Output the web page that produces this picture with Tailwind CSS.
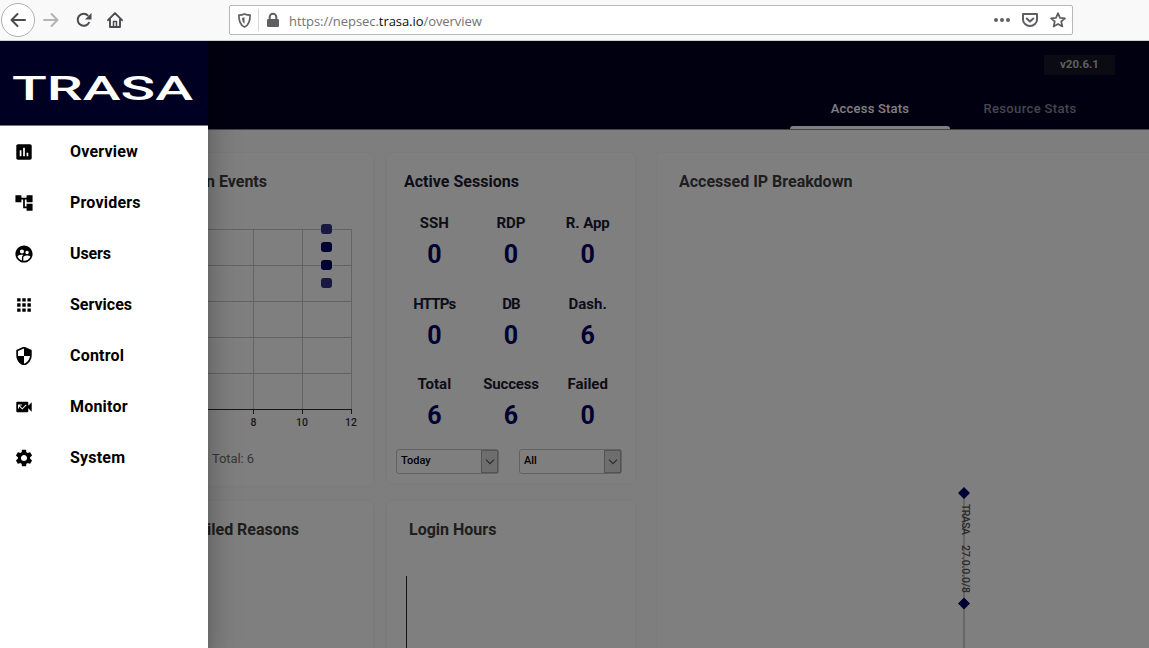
<!DOCTYPE html>
<html lang="en">
<head>
<meta charset="utf-8">
<title>TRASA</title>
<script src="https://cdn.jsdelivr.net/npm/@tailwindcss/browser@4"></script>
</head>
<body class="h-[648px] w-[1149px] overflow-hidden bg-white font-['Roboto',sans-serif] text-black">
<!-- Browser toolbar -->
<div class="flex h-[41px] items-center border-b border-[#d0d0d0] bg-[#f9f9fa] text-[#4a4a4f]">
  <div class="ml-px flex size-[34px] shrink-0 items-center justify-center rounded-full border border-[#b1b1b3] bg-white">
    <svg class="size-4" viewBox="0 0 16 16" fill="none" stroke="currentColor" stroke-width="2" stroke-linecap="round" stroke-linejoin="round"><path d="M15 8H1.500M7.500 2L1.500 8l6 6"/></svg>
  </div>
  <svg class="ml-2 size-4 shrink-0 text-[#b4b4b6]" viewBox="0 0 16 16" fill="none" stroke="currentColor" stroke-width="2" stroke-linecap="round" stroke-linejoin="round"><path d="M1 8h13.500M8.500 2l6 6-6 6"/></svg>
  <svg class="ml-[17px] size-4 shrink-0" viewBox="0 0 16 16" fill="none" stroke="currentColor" stroke-width="2"><path d="M13.300 10A6 6 0 1 1 12.200 3.800"/><path d="M15.500 1v6.500H9z" fill="currentColor" stroke="none"/></svg>
  <svg class="ml-[15px] size-4 shrink-0" viewBox="0 0 16 16" fill="none" stroke="currentColor" stroke-width="1.900" stroke-linecap="round" stroke-linejoin="round"><path d="M1 8.200L8 1.200l7 7M3 7.500V15h10V7.500"/><path d="M6.500 14.500v-5h3v5" stroke-width="1.500"/></svg>
  <div class="ml-[106px] flex h-[30px] w-[844px] shrink-0 items-center rounded-[2px] border border-[#b8b8ba] bg-white text-[#5f5f63]">
    <svg class="ml-[7px] size-[15px]" viewBox="0 0 16 16" fill="none" stroke="currentColor" stroke-width="1.800" stroke-linejoin="round"><path d="M8 1c2 1 4 1.300 6 1.300C14 9 12.500 13 8 15 3.500 13 2 9 2 2.300 4 2.300 6 2 8 1z"/><path d="M8 4.500v7c-2-1.500-2.500-3.500-2.600-6.300z" fill="currentColor" stroke="none"/></svg>
    <div class="ml-[6px] h-[22px] w-px bg-[#d7d7db]"></div>
    <svg class="ml-[6px] size-4" viewBox="0 0 16 16"><rect x="2" y="7" width="12" height="8" rx="1.300" fill="currentColor"/><path d="M4.700 8V5a3.300 3.300 0 0 1 6.600 0v3" fill="none" stroke="currentColor" stroke-width="2"/></svg>
    <div class="mt-[2px] ml-2 w-[701px] font-['Open_Sans',sans-serif] text-[13px] leading-5 tracking-[-0.060px] text-[#737373]">https://nepsec.<span class="text-[#0c0c0d]">trasa.io</span>/overview</div>
    <svg class="ml-[4px] size-4" viewBox="0 0 16 16" fill="currentColor"><circle cx="2" cy="8" r="2"/><circle cx="8" cy="8" r="2"/><circle cx="14" cy="8" r="2"/></svg>
    <svg class="ml-3 size-4" viewBox="0 0 16 16" fill="none" stroke="currentColor" stroke-width="2" stroke-linecap="round" stroke-linejoin="round"><path d="M1 2h14v5.500a7 6.500 0 0 1-14 0z"/><path d="M4.700 6.500L8 9.600l3.300-3.100"/></svg>
    <svg class="ml-3 size-4" viewBox="0 0 16 16" fill="none" stroke="currentColor" stroke-width="1.700" stroke-linejoin="round"><path d="M8 1.200l2 4.600 5 .5-3.800 3.200 1.200 5L8 11.900l-4.400 2.600 1.200-5L1 6.300l5-.5z"/></svg>
  </div>
</div>

<div class="relative h-[607px] overflow-hidden">
  <!-- Page behind the drawer -->
  <header class="flex h-[88px] flex-col items-end bg-[#000022]">
    <div class="mt-[14px] mr-[34px] flex h-5 w-[71px] items-center justify-center bg-[#161628] text-[11.500px] font-bold text-[#bdbdbd]">v20.6.1</div>
    <nav class="mt-auto mr-[39px] flex text-[13px] font-medium">
      <div class="flex h-[41px] w-[160px] flex-col items-center justify-end text-white"><span class="mb-[7px] leading-5 tracking-[0.200px]">Access Stats</span><span class="h-[3px] w-full rounded-t bg-white"></span></div>
      <div class="flex h-[41px] w-[160px] flex-col items-center justify-end text-[#8c8c98]"><span class="mb-[10px] leading-5 tracking-[0.350px]">Resource Stats</span></div>
    </nav>
  </header>
  <main class="flex h-[519px] border-t border-[#888] bg-[#fdfdfd] pt-[23px] pl-6">
    <div class="flex w-[349px] shrink-0 flex-col gap-[15px]">
      <section class="h-[333px] shrink-0 rounded-[5px] bg-[#fefefe] shadow-[0_0_4px_rgba(0,0,0,0.06)]">
        <h2 class="mt-[17px] w-[243px] text-right text-base leading-6 font-bold text-[#3c3c3c]">Login Events</h2>
        <svg class="mt-6 h-[214px] w-[349px]" viewBox="24 218 349 214">
          <g stroke="#c8c8c8" stroke-width="1"><path d="M60 229.500H351.500M60 265.500H351.500M60 301.500H351.500M60 337.500H351.500M60 373.500H351.500M253.500 229V409M302.500 229V409M351.500 229V409"/></g>
          <path d="M60 409.500H352M253.500 409v5M302.500 409v5M351.500 409v5" stroke="#2c2c2c" fill="none"/>
          <g fill="#000066"><rect x="321" y="224" width="11" height="10" rx="3" fill="#303084"/><rect x="321" y="242" width="11" height="10" rx="3"/><rect x="321" y="260" width="11" height="10" rx="3"/><rect x="321" y="278" width="11" height="10" rx="3" fill="#303084"/></g>
          <g fill="#333" font-size="10.500" font-weight="500" text-anchor="middle"><text x="253.500" y="426">8</text><text x="302" y="426">10</text><text x="351" y="426">12</text></g>
        </svg>
        <p class="mt-[17px] ml-[188px] text-[13px] leading-5 tracking-[-0.100px] text-[#707070]">Total: 6</p>
      </section>
      <section class="h-[334px] shrink-0 rounded-[5px] bg-[#fefefe] shadow-[0_0_4px_rgba(0,0,0,0.06)]">
        <h2 class="mt-[17px] w-[275px] text-right text-base leading-6 font-bold text-[#3c3c3c]">Failed Reasons</h2>
      </section>
    </div>
    <div class="ml-[14px] flex w-[248px] shrink-0 flex-col gap-[18px]">
      <section class="flex h-[330px] shrink-0 flex-col rounded-[5px] bg-[#fefefe] shadow-[0_0_4px_rgba(0,0,0,0.06)]">
        <h2 class="mt-[17px] ml-[17px] text-base leading-6 font-bold tracking-[0.010px] text-[#1b1b32]">Active Sessions</h2>
        <div class="mt-[17px] ml-[9px] grid w-[230px] grid-cols-3 gap-y-[20.500px] text-center text-[15px] leading-6 font-bold text-[#1b1b32]">
          <div>SSH<div class="mt-[4px] text-[25px] leading-8 text-[#000066]">0</div></div>
          <div>RDP<div class="mt-[4px] text-[25px] leading-8 text-[#000066]">0</div></div>
          <div class="tracking-[-0.100px]">R. App<div class="mt-[4px] text-[25px] leading-8 text-[#000066]">0</div></div>
          <div><span class="tracking-[-0.900px]">HTTPs</span><div class="mt-[4px] text-[25px] leading-8 text-[#000066]">0</div></div>
          <div><span class="tracking-[-0.800px]">DB</span><div class="mt-[4px] text-[25px] leading-8 text-[#000066]">0</div></div>
          <div>Dash.<div class="mt-[4px] text-[25px] leading-8 text-[#000066]">6</div></div>
          <div>Total<div class="mt-[4px] text-[25px] leading-8 text-[#000066]">6</div></div>
          <div><span class="tracking-[-0.200px]">Success</span><div class="mt-[4px] text-[25px] leading-8 text-[#000066]">6</div></div>
          <div>Failed<div class="mt-[4px] text-[25px] leading-8 text-[#000066]">0</div></div>
        </div>
        <div class="mt-auto mb-[9px] ml-[9px] flex gap-[20px] text-[11px] font-medium text-black">
          <div class="flex h-[25px] w-[103px] items-center justify-between rounded-[3px] border border-[#c4c4c8] pl-[4px]">Today<span class="flex h-full w-[17px] items-center justify-center border border-[#a8a8a8] bg-[#dcdcdc]"><svg class="h-[6px] w-[10px]" viewBox="0 0 10 6" fill="none" stroke="#555" stroke-width="1.200"><path d="M1 .7l4 4 4-4"/></svg></span></div>
          <div class="flex h-[25px] w-[103px] items-center justify-between rounded-[3px] border border-[#c4c4c8] pl-[4px]">All<span class="flex h-full w-[17px] items-center justify-center border border-[#a8a8a8] bg-[#dcdcdc]"><svg class="h-[6px] w-[10px]" viewBox="0 0 10 6" fill="none" stroke="#555" stroke-width="1.200"><path d="M1 .7l4 4 4-4"/></svg></span></div>
        </div>
      </section>
      <section class="h-[332px] shrink-0 rounded-[5px] bg-[#fefefe] shadow-[0_0_4px_rgba(0,0,0,0.06)]">
        <h2 class="mt-[17px] ml-[22px] text-base leading-6 font-bold text-[#3c3c3c]">Login Hours</h2>
        <div class="mt-[34px] ml-[19px] h-[200px] w-px bg-[#222]"></div>
      </section>
    </div>
    <section class="ml-[22px] h-[600px] w-[520px] shrink-0 rounded-[5px] bg-[#fefefe] shadow-[0_0_4px_rgba(0,0,0,0.06)]">
      <h2 class="mt-[17px] ml-[22px] text-base leading-6 font-bold text-[#3c3c3c]">Accessed IP Breakdown</h2>
      <svg class="mt-[286px] ml-[287px] h-[170px] w-10" viewBox="944 480 40 170">
        <path d="M964 493V650" stroke="#cfcfcf" stroke-width="2"/>
        <path d="M964 487l6 6-6 6-6-6zM964 597.500l6 6-6 6-6-6z" fill="#000066"/>
        <g transform="translate(961.500 504) rotate(90)" fill="#555" font-size="10.500" font-weight="500"><text textLength="31">TRASA</text><text x="41" textLength="48">27.0.0.0/8</text></g>
      </svg>
    </section>
  </main>
  <div class="absolute inset-0 bg-black/50"></div>

  <!-- Navigation drawer -->
  <aside class="absolute inset-y-0 left-0 w-[208px] bg-white shadow-[0_8px_10px_-5px_rgba(0,0,0,0.2),0_16px_24px_2px_rgba(0,0,0,0.14),0_6px_30px_5px_rgba(0,0,0,0.12)]">
    <div class="h-[85px] border-b border-[#777] bg-[#000022]">
      <svg class="h-[84px] w-[208px]" viewBox="0 0 208 84"><text x="12" y="58.500" textLength="181" lengthAdjust="spacingAndGlyphs" fill="#fff" font-size="33" font-weight="500">TRASA</text></svg>
    </div>
    <nav class="flex flex-col text-base font-bold tracking-[0.200px]">
      <a class="flex h-[51px] items-center gap-[37px] pl-[15px]"><svg class="size-[18px]" viewBox="1.500 1.500 21 21"><path d="M19 3H5c-1.100 0-2 .9-2 2v14c0 1.100.9 2 2 2h14c1.100 0 2-.9 2-2V5c0-1.100-.9-2-2-2zM9 17H7v-7h2v7zm4 0h-2V7h2v10zm4 0h-2v-4h2v4z"/></svg>Overview</a>
      <a class="flex h-[51px] items-center gap-[37px] pl-[15px]"><svg class="size-[18px]" viewBox="1.500 1.500 21 21"><path d="M22 11V3h-7v3H9V3H2v8h7V8h2v10h4v3h7v-8h-7v3h-2V8h2v3z"/></svg>Providers</a>
      <a class="flex h-[51px] items-center gap-[37px] pl-[15px] tracking-[-0.100px]"><svg class="size-[18px]" viewBox="1.500 1.500 21 21"><path d="M12 2C6.480 2 2 6.480 2 12s4.480 10 10 10 10-4.480 10-10S17.520 2 12 2zm3.610 6.340c1.070 0 1.930.86 1.930 1.930s-.86 1.930-1.930 1.930-1.930-.86-1.930-1.930c-.01-1.070.86-1.930 1.930-1.930zm-6-1.580c1.300 0 2.360 1.060 2.360 2.360s-1.060 2.360-2.360 2.360-2.360-1.060-2.360-2.360c0-1.310 1.050-2.360 2.360-2.360zm0 9.130v3.750c-2.400-.75-4.300-2.600-5.140-4.960 1.050-1.120 3.670-1.690 5.140-1.690.53 0 1.200.08 1.900.22-1.640.87-1.900 2.020-1.900 2.680zM12 20c-.27 0-.53-.01-.79-.04v-4.070c0-1.420 2.940-2.130 4.400-2.130 1.070 0 2.920.39 3.840 1.150C18.280 17.880 15.390 20 12 20z"/></svg>Users</a>
      <a class="flex h-[51px] items-center gap-[37px] pl-[15px] tracking-normal"><svg class="size-[18px]" viewBox="1.500 1.500 21 21"><path d="M4 8h4V4H4v4zm6 12h4v-4h-4v4zm-6 0h4v-4H4v4zm0-6h4v-4H4v4zm6 0h4v-4h-4v4zm6-10v4h4V4h-4zm-6 4h4V4h-4v4zm6 6h4v-4h-4v4zm0 6h4v-4h-4v4z"/></svg>Services</a>
      <a class="flex h-[51px] items-center gap-[37px] pl-[15px]"><svg class="size-[18px]" viewBox="1.500 1.500 21 21"><path d="M12 1L3 5v6c0 5.550 3.840 10.740 9 12 5.160-1.260 9-6.450 9-12V5l-9-4zm0 10.990h7c-.53 4.120-3.280 7.790-7 8.940V12H5V6.300l7-3.110v8.800z"/></svg>Control</a>
      <a class="flex h-[51px] items-center gap-[37px] pl-[15px]"><svg class="size-[18px]" viewBox="1.500 1.500 21 21"><path d="M17 10.500V7c0-.55-.45-1-1-1H4c-.55 0-1 .45-1 1v10c0 .55.45 1 1 1h12c.55 0 1-.45 1-1v-3.500l4 4v-11l-4 4zM10 15l-3.890-3.890v2.550H5V9.220h4.440v1.110H6.890l3.110 3.100 4.220-4.220.78.790-5 5z"/></svg>Monitor</a>
      <a class="flex h-[51px] items-center gap-[37px] pl-[15px]"><svg class="size-[18px]" viewBox="1.500 1.500 21 21"><path d="M19.140 12.940c.04-.3.060-.61.060-.94 0-.32-.02-.64-.07-.94l2.030-1.580c.18-.14.230-.41.120-.61l-1.920-3.320c-.12-.22-.37-.29-.59-.22l-2.390.96c-.5-.38-1.030-.7-1.620-.94l-.36-2.540c-.04-.24-.24-.41-.48-.41h-3.840c-.24 0-.43.17-.47.41l-.36 2.540c-.59.24-1.130.57-1.620.94l-2.390-.96c-.22-.08-.47 0-.59.22L2.740 8.870c-.12.210-.08.470.12.610l2.030 1.580c-.05.300-.09.630-.09.940s.02.640.07.940l-2.030 1.580c-.18.140-.23.410-.12.610l1.920 3.320c.12.220.37.290.59.220l2.390-.96c.5.380 1.030.7 1.620.94l.36 2.540c.05.240.24.410.48.410h3.840c.24 0 .44-.17.470-.41l.36-2.540c.59-.24 1.130-.56 1.620-.94l2.390.96c.22.080.47 0 .59-.22l1.920-3.320c.12-.22.070-.47-.12-.61l-2.010-1.580zM12 15.600c-1.980 0-3.600-1.620-3.600-3.600s1.620-3.600 3.600-3.600 3.600 1.620 3.600 3.600-1.620 3.600-3.600 3.600z"/></svg>System</a>
    </nav>
  </aside>
</div>
</body>
</html>
